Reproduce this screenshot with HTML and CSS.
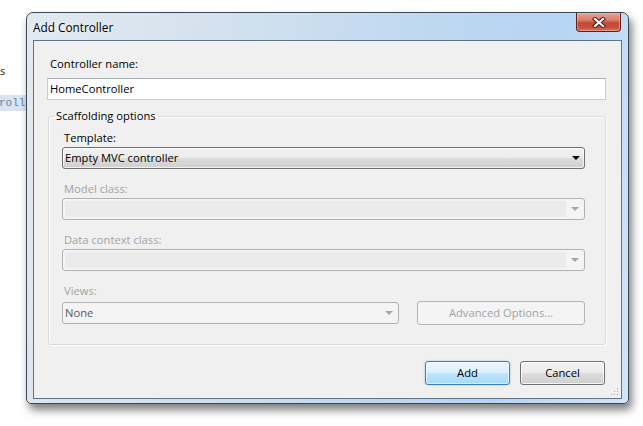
FILE: index.html
```html
<!DOCTYPE html>
<html>
<head>
<meta charset="utf-8">
<link rel="stylesheet" href="styles.css">
</head>
<body>
  <div class="bg-word">s</div>
  <div class="bg-code">roll</div>

  <div class="window">
    <div class="titlebar">
      <span class="title">Add Controller</span>
      <div class="close">
        <svg width="14" height="11" viewBox="0 0 14 11">
          <path d="M3 2 L11 9 M11 2 L3 9" stroke="#4a1a14" stroke-width="4.2" stroke-linecap="square" fill="none"/>
          <path d="M3 2 L11 9 M11 2 L3 9" stroke="#ffffff" stroke-width="2.2" stroke-linecap="square" fill="none"/>
        </svg>
      </div>
    </div>

    <div class="client">
      <div class="label">Controller name:</div>
      <div class="textbox">HomeController</div>

      <fieldset class="group">
        <legend>Scaffolding options</legend>

        <div class="field">
          <div class="label sub">Template:</div>
          <div class="combo active">
            <span class="combo-text">Empty MVC controller</span>
            <span class="arrow dark"></span>
          </div>
        </div>

        <div class="field">
          <div class="label sub disabled">Model class:</div>
          <div class="combo disabled-combo">
            <span class="edit"></span>
            <span class="arrow"></span>
          </div>
        </div>

        <div class="field">
          <div class="label sub disabled">Data context class:</div>
          <div class="combo disabled-combo">
            <span class="edit"></span>
            <span class="arrow"></span>
          </div>
        </div>

        <div class="field last">
          <div class="label sub disabled">Views:</div>
          <div class="views-row">
            <div class="combo disabled-combo views">
              <span class="combo-text muted">None</span>
              <span class="arrow"></span>
            </div>
            <div class="adv-btn">Advanced Options...</div>
          </div>
        </div>
      </fieldset>

      <div class="actions">
        <div class="btn default">Add</div>
        <div class="btn">Cancel</div>
      </div>

      <div class="grip">
        <svg width="8" height="8" viewBox="0 0 8 8">
          <rect x="6" y="0" width="1" height="1" fill="#a8a8a8"/>
          <rect x="3" y="3" width="1" height="1" fill="#a8a8a8"/>
          <rect x="6" y="3" width="1" height="1" fill="#a8a8a8"/>
          <rect x="0" y="6" width="1" height="1" fill="#a8a8a8"/>
          <rect x="3" y="6" width="1" height="1" fill="#a8a8a8"/>
          <rect x="6" y="6" width="1" height="1" fill="#a8a8a8"/>
        </svg>
      </div>
    </div>
  </div>
</body>
</html>
```

FILE: styles.css
```css
* { box-sizing: border-box; }

html, body { margin: 0; padding: 0; }

body {
  width: 643px;
  height: 426px;
  background: #ffffff;
  position: relative;
  overflow: hidden;
  font-family: "Open Sans", "Noto Sans", sans-serif;
  font-size: 11.2px;
  color: #000;
}

.bg-word {
  position: absolute;
  left: 0;
  top: 63px;
  font-size: 11px;
  line-height: 16px;
  color: #222;
}

.bg-code {
  position: absolute;
  left: 0;
  top: 95px;
  width: 30px;
  height: 16px;
  background: #dae4ee;
  font-family: "Liberation Mono", monospace;
  font-size: 11px;
  line-height: 16px;
  color: #5d84a6;
  padding-left: 0;
  text-indent: -1px;
}

.window {
  position: absolute;
  left: 26px;
  top: 12px;
  width: 603px;
  height: 392px;
  border: 1px solid #3b4654;
  border-radius: 7px 7px 5px 5px;
  background: linear-gradient(100deg, #e3e9ef 0%, #d3e1ee 30%, #bfd8f1 60%, #b6d4f3 80%, #d2e5f8 100%);
  box-shadow: 3px 6px 9px rgba(0, 0, 0, 0.5), 0 0 1px rgba(255,255,255,0.6) inset;
  padding: 0 6px 4px 6px;
  display: flex;
  flex-direction: column;
}

.titlebar {
  height: 27px;
  display: flex;
  justify-content: space-between;
  align-items: flex-start;
  flex-shrink: 0;
}

.title {
  margin-top: 6px;
  font-size: 11.8px;
  line-height: 16px;
  color: #000;
  text-shadow: 0 0 6px rgba(255,255,255,0.9);
}

.close {
  width: 45px;
  height: 19px;
  margin-right: 1px;
  border: 1px solid #5a2019;
  border-top: none;
  border-radius: 0 0 4px 4px;
  background: linear-gradient(to bottom, #e7a596 0%, #d77d69 40%, #c24a35 55%, #c7513b 80%, #d5765c 100%);
  box-shadow: inset 0 0 0 1px rgba(255, 200, 190, 0.45);
  display: flex;
  align-items: center;
  justify-content: center;
}

.close svg { display: block; }

.client {
  flex: 1;
  border: 1px solid #607389;
  background: #f0f0f0;
  padding: 15px 15px 0 13px;
  position: relative;
  display: flex;
  flex-direction: column;
}

.label {
  line-height: 16px;
  margin-left: 3px;
  color: #000;
}

.label.sub { margin-left: 2px; }

.label.disabled { color: #a3a3a3; }

.textbox {
  margin-top: 6px;
  height: 22px;
  border: 1px solid #c5ccd4;
  border-top-color: #a9b0b8;
  background: #ffffff;
  padding-left: 2px;
  line-height: 20px;
}

.group {
  margin: 8px 0 0 1px;
  padding: 6px 20px 19px 13px;
  border: 1px solid #d5d9dc;
  border-radius: 3px;
  box-shadow: inset 1px 1px 0 #ffffff, 1px 1px 0 #ffffff;
  min-width: 0;
}

.group legend {
  padding: 0 2px;
  margin-left: -8px;
  line-height: 16px;
  color: #000;
}

.field {
  display: flex;
  flex-direction: column;
  margin-bottom: 12px;
}

.field.last { margin-bottom: 0; }

.field .label { margin-bottom: 1px; }

.combo {
  height: 22px;
  border-radius: 3px;
  position: relative;
  display: flex;
  align-items: center;
}

.combo.active {
  border: 1px solid #707070;
  background: linear-gradient(to bottom, #f2f2f2 0%, #ebebeb 50%, #dddddd 51%, #cfcfcf 100%);
  box-shadow: inset 0 0 0 1px rgba(255,255,255,0.7);
}

.combo.disabled-combo {
  border: 1px solid #b2b2b2;
  background: #f4f4f4;
}

.combo-text {
  padding-left: 2px;
  line-height: 20px;
}

.combo-text.muted { color: #5a5a5a; }

.edit {
  position: absolute;
  left: 2px;
  top: 2px;
  bottom: 2px;
  right: 18px;
  background: #ebebeb;
}

.arrow {
  position: absolute;
  right: 5px;
  top: 8px;
  width: 0;
  height: 0;
  border-left: 4px solid transparent;
  border-right: 4px solid transparent;
  border-top: 4px solid #a6a6a6;
}

.arrow.dark { border-top-color: #000; right: 4px; }

.views-row {
  height: 24px;
  margin-top: 1px;
  display: flex;
  align-items: center;
  justify-content: space-between;
}

.combo.views {
  width: 337px;
}

.adv-btn {
  width: 168px;
  height: 24px;
  border: 1px solid #b5b5b5;
  border-radius: 3px;
  background: #f4f4f4;
  color: #a3a3a3;
  text-align: center;
  line-height: 22px;
}

.actions {
  margin-top: 16px;
  display: flex;
  justify-content: flex-end;
  gap: 10px;
  padding-right: 1px;
}

.btn {
  width: 85px;
  height: 24px;
  border: 1px solid #707070;
  border-radius: 3px;
  background: linear-gradient(to bottom, #f2f2f2 0%, #ebebeb 50%, #dddddd 51%, #cfcfcf 100%);
  box-shadow: inset 0 0 0 1px rgba(255,255,255,0.75);
  text-align: center;
  line-height: 22px;
  color: #000;
}

.btn.default {
  border-color: #3c7fb1;
  background: linear-gradient(to bottom, #eaf6fd 0%, #d9f0fc 50%, #bee6fd 51%, #a7d9f5 100%);
  box-shadow: inset 0 0 0 1px rgba(255,255,255,0.6), 0 0 2px rgba(60,160,230,0.6);
}

.grip {
  position: absolute;
  right: 2px;
  bottom: 2px;
  width: 8px;
  height: 8px;
}

.grip svg { display: block; }
```
